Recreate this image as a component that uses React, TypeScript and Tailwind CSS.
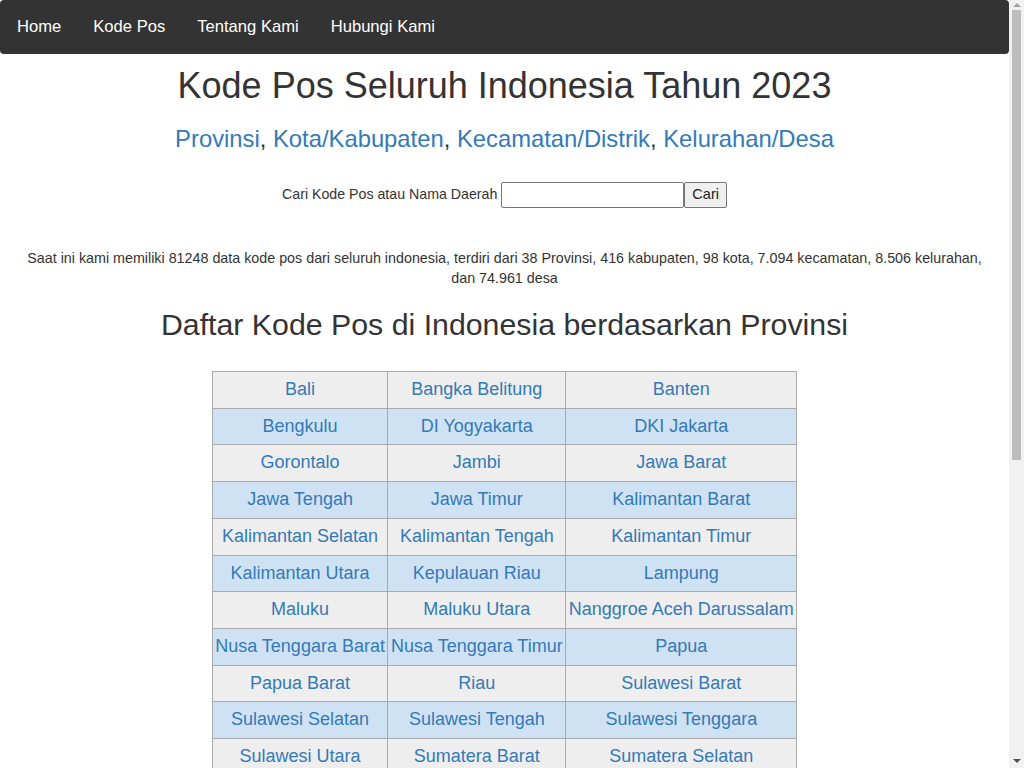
import * as React from "react";

const navItems: string[] = ["Home", "Kode Pos", "Tentang Kami", "Hubungi Kami"];

const provinces: string[] = [
  "Bali",
  "Bangka Belitung",
  "Banten",
  "Bengkulu",
  "DI Yogyakarta",
  "DKI Jakarta",
  "Gorontalo",
  "Jambi",
  "Jawa Barat",
  "Jawa Tengah",
  "Jawa Timur",
  "Kalimantan Barat",
  "Kalimantan Selatan",
  "Kalimantan Tengah",
  "Kalimantan Timur",
  "Kalimantan Utara",
  "Kepulauan Riau",
  "Lampung",
  "Maluku",
  "Maluku Utara",
  "Nanggroe Aceh Darussalam",
  "Nusa Tenggara Barat",
  "Nusa Tenggara Timur",
  "Papua",
  "Papua Barat",
  "Riau",
  "Sulawesi Barat",
  "Sulawesi Selatan",
  "Sulawesi Tengah",
  "Sulawesi Tenggara",
  "Sulawesi Utara",
  "Sumatera Barat",
  "Sumatera Selatan",
  "Sumatera Utara",
  "Papua Barat Daya",
  "Papua Pegunungan",
  "Papua Selatan",
  "Papua Tengah",
];

// 3 kolom per baris
const rows: string[][] = [];
for (let i = 0; i < provinces.length; i += 3) {
  rows.push(provinces.slice(i, i + 3));
}

const subLinks: string[] = ["Provinsi", "Kota/Kabupaten", "Kecamatan/Distrik", "Kelurahan/Desa"];

const Scrollbar: React.FC = () => (
  <div className="sticky top-0 self-start w-[15px] h-screen shrink-0 bg-[#f1f1f1] flex flex-col items-center">
    <div className="h-[10px] flex items-center justify-center">
      <div className="w-0 h-0 border-x-[4px] border-x-transparent border-b-[4px] border-b-[#a3a3a3]" />
    </div>
    <div className="w-[9px] h-[450px] bg-[#bdbdbd]" />
    <div className="flex-1" />
    <div className="h-[15px] flex items-center justify-center">
      <div className="w-0 h-0 border-x-[4px] border-x-transparent border-t-[4px] border-t-[#505050]" />
    </div>
  </div>
);

const App: React.FC = () => (
  <div className="flex bg-white font-['Liberation_Sans',Arial,sans-serif] text-[#333]">
    <div className="w-[1009px] shrink-0 pb-[420px]">
      <nav className="h-[54px] bg-[#333] rounded-[4px] flex items-center pl-px">
        <ul className="flex">
          {navItems.map((item) => (
            <li key={item}>
              <a className="block px-4 text-[16.6px] leading-[52px] text-white">{item}</a>
            </li>
          ))}
        </ul>
      </nav>

      <h1 className="mt-3 text-center text-[36px] leading-[40px]">Kode Pos Seluruh Indonesia Tahun 2023</h1>

      <h3 className="mt-[19px] text-center text-[23.8px] leading-[28px]">
        {subLinks.map((l, i) => (
          <React.Fragment key={l}>
            <a className="text-[#337ab7]">{l}</a>
            {i < subLinks.length - 1 && ", "}
          </React.Fragment>
        ))}
      </h3>

      <form className="mt-[29px] flex justify-center items-center text-[14.2px]">
        <label className="mr-1">Cari Kode Pos atau Nama Daerah</label>
        <input
          type="text"
          className="w-[183px] h-[26px] border border-[#767676] rounded-[2px] px-1 text-[14px]"
        />
        <button
          type="button"
          className="h-[26px] px-[7px] border border-[#767676] rounded-[2px] bg-[#efefef] text-[14.5px] text-[#222]"
        >
          Cari
        </button>
      </form>

      <p className="mt-10 px-[15px] text-center text-[14.3px] leading-[20px]">
        Saat ini kami memiliki 81248 data kode pos dari seluruh indonesia, terdiri dari 38 Provinsi, 416 kabupaten, 98
        kota, 7.094 kecamatan, 8.506 kelurahan, dan 74.961 desa
      </p>

      <h2 className="mt-5 text-center text-[30.3px] leading-[34px]">Daftar Kode Pos di Indonesia berdasarkan Provinsi</h2>

      <table className="mt-[29px] mx-auto border-collapse">
        <tbody>
          {rows.map((row, idx) => (
            <tr key={idx} className={idx % 2 === 0 ? "bg-[#eeeeee]" : "bg-[#cfe2f3]"}>
              {row.map((p) => (
                <td
                  key={p}
                  className="border border-[#aaaaaa] px-[2.5px] py-[7px] text-center text-[18px] leading-[21.7px]"
                >
                  <a className="text-[#337ab7]">{p}</a>
                </td>
              ))}
            </tr>
          ))}
        </tbody>
      </table>
    </div>
    <Scrollbar />
  </div>
);

export default App;
